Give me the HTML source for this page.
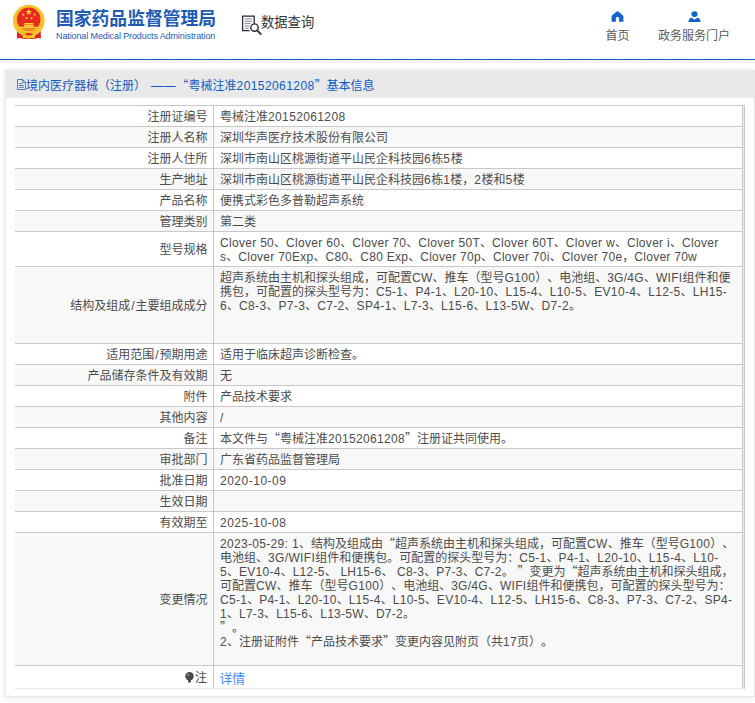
<!DOCTYPE html>
<html lang="zh-CN">
<head>
<meta charset="utf-8">
<title>国家药品监督管理局 数据查询</title>
<style>
html,body{margin:0;padding:0;}
body{width:755px;height:703px;overflow:hidden;background:#fff;position:relative;
 font-family:"Liberation Sans","Noto Sans CJK SC",sans-serif;font-size:12px;color:#4c4c4c;text-spacing-trim:space-all;}
a{text-decoration:none;color:inherit;}
.hdr{position:absolute;left:0;top:0;width:755px;height:59px;background:#fff;}
.hline{position:absolute;left:0;top:59px;width:755px;height:1px;background:#0f62c9;}
.hatch{position:absolute;left:0;top:60px;width:755px;height:3px;
 background:repeating-linear-gradient(135deg,#fff 0,#fff 1.4px,#dcdcdc 1.4px,#dcdcdc 2.1px);opacity:.75;}
.logo{position:absolute;left:12px;top:3px;width:34px;height:38px;}
.brand{position:absolute;left:56px;top:6.5px;white-space:nowrap;color:#1d5bb4;}
.brand .cn{display:block;font-size:17.8px;line-height:24px;font-weight:bold;font-family:"Liberation Sans","Noto Sans CJK SC",sans-serif;}
.brand .en{display:block;font-size:9px;line-height:10px;margin-top:0;letter-spacing:-.11px;}
.dq{position:absolute;left:241px;top:12px;height:24px;white-space:nowrap;color:#333;font-size:13.3px;line-height:20px;}
.dq svg{position:absolute;left:0;top:2px;}
.dq span{position:absolute;left:20px;top:1px;}
.nav{position:absolute;top:0;text-align:center;color:#5a5a5a;font-size:12px;line-height:14px;white-space:nowrap;}
.nav svg{display:block;margin:0 auto;}
.panel{position:absolute;left:5px;top:70px;width:748px;height:625px;border:1px solid #e8e8e8;background:#fff;
 box-shadow:0 1px 7px rgba(0,0,0,.10);}
.ptitle{position:absolute;left:0;top:0;width:748px;height:26px;background:#e9e9e9;border-bottom:1px solid #e6e9f3;color:#0d5bc5;line-height:26px;white-space:nowrap;}
.ptitle svg{position:absolute;left:10.5px;top:8px;}
.ptitle>span{position:absolute;top:2px;}
.ptitle .t1{left:20px;}
.ptitle .t2{left:145px;letter-spacing:.6px;}
.ptitle .t3{left:170.5px;--s:.42px;}
table{position:absolute;left:9px;top:34px;border-collapse:collapse;table-layout:fixed;width:728px;}
td{border-top:1px solid #c9c7c7;padding:4px 6px 2px;line-height:14px;vertical-align:middle;font-size:12px;}
td.k{width:186.5px;padding-right:5.5px;text-align:right;border-right:1px solid #c9c7c7;}
td.v{width:516px;text-align:left;border-right:1px solid #c9c7c7;}
tr.g td{background:#f8f8f8;}
tr.last td{border-bottom:1px solid #e6e9f3;}
.ln{display:inline-block;white-space:pre;--s:.3px;}
.e{letter-spacing:var(--s);}
.q{font-family:"Noto Sans CJK SC",sans-serif;line-height:1px;}
.rb{position:absolute;left:737px;top:34px;width:1px;height:583px;background:#e8eaf4;border-right:1px solid #c9c7c7;border-top:1px solid #c9c7c7;}
.sl{margin:0 1px;}
.lk{color:#4190ff;font-size:12.8px;position:relative;top:1px;left:-.5px;}
</style>
</head>
<body>
<div class="hdr">
 <svg class="logo" viewBox="0 0 34 38">
  <path d="M5.2 27 L28.6 27 L29 35.6 Q25.5 34.2 22.5 36 L11.3 36 Q8.3 34.2 4.8 35.6 Z" fill="#e3261d"/>
  <path d="M10.5 30 Q16.8 27.4 23.3 30 L22.6 35.6 Q19.8 34 16.8 36 Q13.8 34 11 35.6z" fill="#f5c52e"/>
  <circle cx="16.8" cy="17.7" r="15.9" fill="#f6c42c"/>
  <circle cx="16.8" cy="17.2" r="13.2" fill="none" stroke="#f3b51f" stroke-width=".6"/>
  <circle cx="16.7" cy="16.3" r="11.8" fill="#e9291f"/>
  <path d="M16.8 5.7 l.85 2.3 2.45 .05 -1.95 1.5 .7 2.35 -2.05 -1.4 -2.05 1.4 .7 -2.35 -1.95 -1.5 2.45 -.05z" fill="#f9d43a"/>
  <circle cx="11.3" cy="11.6" r="1.05" fill="#f9d43a"/><circle cx="22.6" cy="11.6" r="1.05" fill="#f9d43a"/>
  <circle cx="14.6" cy="15.3" r="1.05" fill="#f9d43a"/><circle cx="19.4" cy="15.3" r="1.05" fill="#f9d43a"/>
  <path d="M12.6 20 h8.4 l1.4 1.6 h-11.2z M12 22 h9.6 v1.6 h-9.6z M7.6 23.8 h18.4 l-.8 1.7 h-16.8z" fill="#f9d43a"/>
  <path d="M9.5 26.3 h14.6 l-1.2 1.2 h-12.2z" fill="#f3b926"/>
  <path d="M12.5 31.2 Q16.8 28.8 21.1 31.2 Q16.8 33.8 12.5 31.2z" fill="#e3261d"/>
 </svg>
 <div class="brand"><span class="cn">国家药品监督管理局</span><span class="en">National Medical Products Administration</span></div>
 <div class="dq">
  <svg width="22" height="22" viewBox="0 0 22 22">
   <path d="M13.2 9.4 V2.2 H1.6 V16.6 H8.6" fill="none" stroke="#2b2b45" stroke-width="1.3"/>
   <path d="M3.6 5 h7.6 M3.6 7.3 h7.6 M3.6 9.6 h6 M3.6 11.9 h4.6 M3.6 14.2 h4.2" stroke="#85858f" stroke-width="1"/>
   <circle cx="13.5" cy="13.6" r="3.7" fill="#fff" stroke="#2b2b45" stroke-width="1.4"/>
   <path d="M16.2 16.4 L19.8 20.2" stroke="#2b2b45" stroke-width="1.8" stroke-linecap="round"/>
  </svg>
  <span>数据查询</span>
 </div>
 <a class="nav" style="left:597px;width:41px;top:11px">
  <svg width="13" height="11" preserveAspectRatio="none" viewBox="0 0 13 12"><path d="M6.5 0.4 Q7.1 0.4 7.6 0.9 L12 5 Q12.4 5.4 12.4 6 V11.6 H8.1 V8 Q8.1 6.6 6.5 6.6 Q4.9 6.6 4.9 8 V11.6 H0.6 V6 Q0.6 5.4 1 5 L5.4 0.9 Q5.9 0.4 6.5 0.4z" fill="#1461cc"/></svg>
  <span style="display:block;margin-top:7px">首页</span>
 </a>
 <a class="nav" style="left:654px;width:81px;top:11px">
  <svg width="13" height="11" preserveAspectRatio="none" viewBox="0 0 13 12"><circle cx="6.5" cy="3.4" r="3.1" fill="#1461cc"/><path d="M0.5 12 Q0.5 8.6 3.4 7.2 L6.5 9.6 L9.6 7.2 Q12.5 8.6 12.5 12z" fill="#1461cc"/></svg>
  <span style="display:block;margin-top:7px;margin-left:-1px">政务服务门户</span>
 </a>
</div>
<div class="hline"></div>
<div class="hatch"></div>

<div class="panel">
 <div class="ptitle">
  <svg width="9" height="11" viewBox="0 0 9 11"><path d="M0.5 0.5 H5.7 L8.5 3.3 V10.5 H0.5z M5.7 0.5 V3.3 H8.5 M2.2 4.6 h3 M2.2 6.5 h4.6 M2.2 8.4 h4.6" fill="none" stroke="#2a6fd0" stroke-width=".9"/></svg>
  <span class="t1">境内医疗器械（注册）</span><span class="t2">——</span><span class="t3"><span class="q">“</span>粤械注准<span class="e">20152061208</span><span class="q">”</span>基本信息</span>
 </div>
 <table cellspacing="0" cellpadding="0">
  <tr><td class="k">注册证编号</td><td class="v"><span class="ln" style="--s:0.369px">粤械注准<span class="e">20152061208</span></span></td></tr>
  <tr class="g"><td class="k">注册人名称</td><td class="v"><span class="ln">深圳华声医疗技术股份有限公司</span></td></tr>
  <tr><td class="k">注册人住所</td><td class="v"><span class="ln" style="--s:0.639px">深圳市南山区桃源街道平山民企科技园<span class="e">6</span>栋<span class="e">5</span>楼</span></td></tr>
  <tr class="g"><td class="k">生产地址</td><td class="v"><span class="ln" style="--s:0.468px">深圳市南山区桃源街道平山民企科技园<span class="e">6</span>栋<span class="e">1</span>楼，<span class="e">2</span>楼和<span class="e">5</span>楼</span></td></tr>
  <tr><td class="k">产品名称</td><td class="v"><span class="ln">便携式彩色多普勒超声系统</span></td></tr>
  <tr class="g"><td class="k">管理类别</td><td class="v"><span class="ln">第二类</span></td></tr>
  <tr><td class="k">型号规格</td><td class="v"><span class="ln" style="--s:0.303px"><span class="e">Clover 50</span>、<span class="e">Clover 60</span>、<span class="e">Clover 70</span>、<span class="e">Clover 50T</span>、<span class="e">Clover 60T</span>、<span class="e">Clover w</span>、<span class="e">Clover i</span>、<span class="e">Clover</span></span><br><span class="ln" style="--s:0.265px"><span class="e">s</span>、<span class="e">Clover 70Exp</span>、<span class="e">C80</span>、<span class="e">C80 Exp</span>、<span class="e">Clover 70p</span>、<span class="e">Clover 70i</span>、<span class="e">Clover 70e</span>，<span class="e">Clover 70w</span></span></td></tr>
  <tr class="g"><td class="k">结构及组成<span class="sl">/</span>主要组成成分</td><td class="v"><span class="ln" style="--s:0.292px">超声系统由主机和探头组成，可配置<span class="e">CW</span>、推车（型号<span class="e">G100</span>）、电池组、<span class="e">3G/4G</span>、<span class="e">WIFI</span>组件和便</span><br><span class="ln" style="--s:0.332px">携包，可配置的探头型号为：<span class="e">C5-1</span>、<span class="e">P4-1</span>、<span class="e">L20-10</span>、<span class="e">L15-4</span>、<span class="e">L10-5</span>、<span class="e">EV10-4</span>、<span class="e">L12-5</span>、<span class="e">LH15-</span></span><br><span class="ln" style="--s:0.342px"><span class="e">6</span>、<span class="e">C8-3</span>、<span class="e">P7-3</span>、<span class="e">C7-2</span>、<span class="e">SP4-1</span>、<span class="e">L7-3</span>、<span class="e">L15-6</span>、<span class="e">L13-5W</span>、<span class="e">D7-2</span>。</span><br><br><br></td></tr>
  <tr><td class="k">适用范围<span class="sl">/</span>预期用途</td><td class="v"><span class="ln">适用于临床超声诊断检查。</span></td></tr>
  <tr class="g"><td class="k">产品储存条件及有效期</td><td class="v"><span class="ln">无</span></td></tr>
  <tr><td class="k">附件</td><td class="v"><span class="ln">产品技术要求</span></td></tr>
  <tr class="g"><td class="k">其他内容</td><td class="v"><span class="ln"><span class="e">/</span></span></td></tr>
  <tr><td class="k">备注</td><td class="v"><span class="ln" style="--s:0.318px">本文件与<span class="q">“</span>粤械注准<span class="e">20152061208</span><span class="q">”</span>注册证共同使用。</span></td></tr>
  <tr class="g"><td class="k">审批部门</td><td class="v"><span class="ln">广东省药品监督管理局</span></td></tr>
  <tr><td class="k">批准日期</td><td class="v"><span class="ln" style="--s:0.511px"><span class="e">2020-10-09</span></span></td></tr>
  <tr class="g"><td class="k">生效日期</td><td class="v"><span class="ln">&nbsp;</span></td></tr>
  <tr><td class="k">有效期至</td><td class="v"><span class="ln" style="--s:0.511px"><span class="e">2025-10-08</span></span></td></tr>
  <tr class="g"><td class="k">变更情况</td><td class="v"><span class="ln" style="--s:0.323px"><span class="e">2023-05-29: 1</span>、结构及组成由<span class="q">“</span>超声系统由主机和探头组成，可配置<span class="e">CW</span>、推车（型号<span class="e">G100</span>）、</span><br><span class="ln" style="--s:0.348px">电池组、<span class="e">3G/WIFI</span>组件和便携包。可配置的探头型号为：<span class="e">C5-1</span>、<span class="e">P4-1</span>、<span class="e">L20-10</span>、<span class="e">L15-4</span>、<span class="e">L10-</span></span><br><span class="ln" style="--s:0.277px"><span class="e">5</span>、<span class="e">EV10-4</span>、<span class="e">L12-5</span>、<span class="e"> LH15-6</span>、<span class="e"> C8-3</span>、<span class="e">P7-3</span>、<span class="e">C7-2</span>。<span class="e"> </span><span class="q">”</span>变更为<span class="q">“</span>超声系统由主机和探头组成，</span><br><span class="ln" style="--s:0.292px">可配置<span class="e">CW</span>、推车（型号<span class="e">G100</span>）、电池组、<span class="e">3G/4G</span>、<span class="e">WIFI</span>组件和便携包，可配置的探头型号为：</span><br><span class="ln" style="--s:0.277px"><span class="e">C5-1</span>、<span class="e">P4-1</span>、<span class="e">L20-10</span>、<span class="e">L15-4</span>、<span class="e">L10-5</span>、<span class="e">EV10-4</span>、<span class="e">L12-5</span>、<span class="e">LH15-6</span>、<span class="e">C8-3</span>、<span class="e">P7-3</span>、<span class="e">C7-2</span>、<span class="e">SP4-</span></span><br><span class="ln" style="--s:0.277px"><span class="e">1</span>、<span class="e">L7-3</span>、<span class="e">L15-6</span>、<span class="e">L13-5W</span>、<span class="e">D7-2</span>。</span><br><span class="ln"><span class="q">”</span>。</span><br><span class="ln" style="--s:0.286px"><span class="e">2</span>、注册证附件<span class="q">“</span>产品技术要求<span class="q">”</span>变更内容见附页（共<span class="e">17</span>页）。</span><br><br></td></tr>
  <tr class="last"><td class="k" style="height:16px;padding-right:6px"><svg width="9" height="11" viewBox="0 0 9 11" style="vertical-align:-1px;margin-right:1px"><circle cx="4.5" cy="4.3" r="4.2" fill="#4a4a4a"/><rect x="3" y="8" width="3" height="2.6" rx=".8" fill="#4a4a4a"/><circle cx="3.2" cy="3" r="1" fill="#9a9a9a"/></svg>注</td><td class="v"><a class="lk">详情</a></td></tr>
 </table>
 <div class="rb"></div>
</div>
</body>
</html>
